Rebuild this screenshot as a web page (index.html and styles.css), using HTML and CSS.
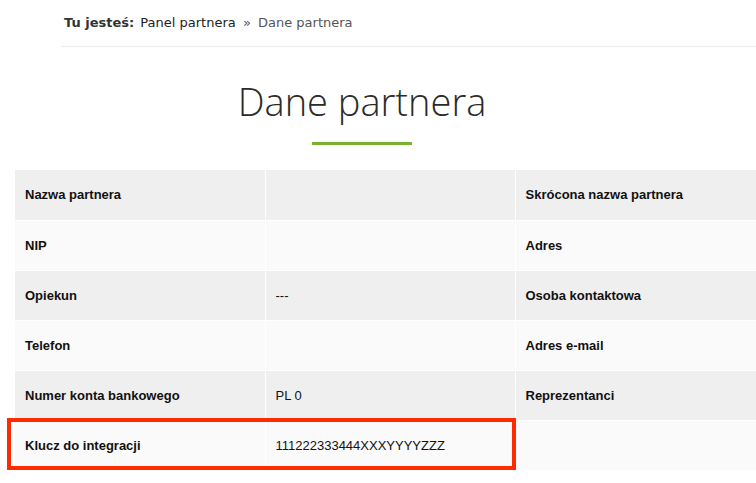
FILE: index.html
```html
<!DOCTYPE html>
<html lang="pl">
<head>
  <meta charset="UTF-8" />
  <title>Dane partnera</title>
  <meta name="viewport" content="width=device-width, initial-scale=1.0"/>
  <link rel="stylesheet" href="styles.css">
</head>
<body>

<div class="breadcrumb">
  <strong>Tu jesteś:</strong>
  <a href="#panel">Panel partnera</a>
  <span class="sep">&raquo;</span>
  <span class="current">Dane partnera</span>
</div>

<div class="page">
  <div class="title">
    <h1>Dane partnera</h1>
    <div class="underline"></div>
  </div>

  <div class="details">
    <table>
      <tr>
        <th>Nazwa partnera</th><td></td>
        <th>Skrócona nazwa partnera</th><td></td>
      </tr>
      <tr>
        <th>NIP</th><td></td>
        <th>Adres</th><td></td>
      </tr>
      <tr>
        <th>Opiekun</th><td>---</td>
        <th>Osoba kontaktowa</th><td></td>
      </tr>
      <tr>
        <th>Telefon</th><td></td>
        <th>Adres e-mail</th><td></td>
      </tr>
      <tr>
        <th>Numer konta bankowego</th><td>PL 0</td>
        <th>Reprezentanci</th><td></td>
      </tr>
      <tr>
        <th>Klucz do integracji</th><td>111222333444XXXYYYYZZZ</td>
        <th></th><td></td>
      </tr>
    </table>
  </div>

  <div class="highlight"></div>
</div>

</body>
</html>
```

FILE: styles.css
```css
html, body { margin: 0; background: #fff; overflow: hidden; }
body { width: 756px; height: 483px; font-family: "Liberation Sans", Arial, sans-serif; color: #111; }

.breadcrumb {
  margin-left: 61px; padding: 15px 0 0 3px; height: 31px;
  border-bottom: 1px solid #ececec;
  font-family: "DejaVu Sans", Verdana, sans-serif; font-size: 13px; color: #333;
  white-space: nowrap; overflow: hidden;
}
.breadcrumb strong { color: #333; margin-right: 2px; }
.breadcrumb a { color: #222; text-decoration: none; }
.breadcrumb .sep { color: #555; margin: 0 3px; }
.breadcrumb .current { color: #555; }

.page { position: relative; padding-left: 15px; }

.title { width: 694px; text-align: center; padding-top: 28px; }
.title h1 {
  margin: 0; font-family: "Open Sans", sans-serif; font-weight: 300;
  font-size: 38px; line-height: 52px; color: #2b2b2b;
}
.underline { width: 100px; height: 3px; background: #78b32f; margin: 15px auto 0; }

.details { margin-top: 25px; width: 741px; overflow: hidden; }
.details table { border-collapse: collapse; width: 1000px; table-layout: fixed; }
th, td {
  width: 250px; height: 50px; padding: 0 10px; box-sizing: border-box;
  border: 1px solid #fff; text-align: left; font-size: 13px; color: #111;
}
th { font-weight: bold; }
td { font-weight: normal; }
tr:nth-child(odd) th, tr:nth-child(odd) td { background: #efefef; }
tr:nth-child(even) th, tr:nth-child(even) td { background: #fafafa; }
tr:first-child th, tr:first-child td { border-top: 0; }
tr th:first-child { border-left: 0; }

/* annotation box round the integration key row */
.highlight {
  position: absolute; left: 7px; top: 371px;
  width: 501px; height: 44px;
  border: 4px solid #ff2a00;
}
```
